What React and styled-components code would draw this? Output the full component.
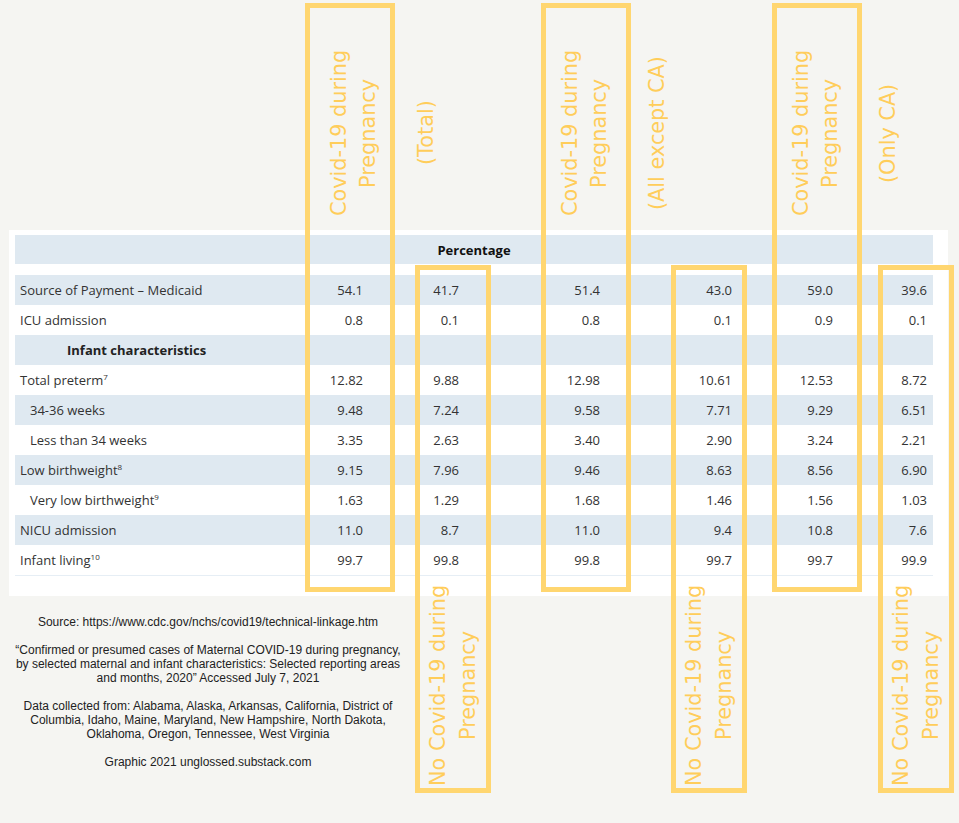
import React from "react";
import styled, { createGlobalStyle } from "styled-components";

const YELLOW = "#ffd670";
const CAPTION = "#ffcd5a";
const BAND = "#dfe9f1";

const GlobalStyle = createGlobalStyle`
  html, body {
    margin: 0;
    padding: 0;
    background: #f5f5f2;
  }
  #root {
    width: 959px;
  }
`;

const Page = styled.div`
  position: relative;
  width: 959px;
  height: 823px;
  overflow: hidden;
  background: #f5f5f2;
`;

/* ---------- header captions ---------- */
const Header = styled.div`
  display: flex;
  height: 230px;
  box-sizing: border-box;
  padding: 33px 0 0 325px;
`;

const HeaderGroup = styled.div`
  display: flex;
  flex-shrink: 0;
  width: 231px;
  gap: 29px;
`;

const Caption = styled.div`
  writing-mode: vertical-rl;
  transform: rotate(180deg);
  height: ${(p) => p.$len}px;
  font-family: "DejaVu Sans", "Liberation Sans", sans-serif;
  font-size: 20.8px;
  line-height: ${(p) => p.$lh || 29}px;
  text-align: center;
  white-space: nowrap;
  color: ${CAPTION};
  margin-left: ${(p) => p.$ml || 0}px;
  margin-top: ${(p) => p.$mt || 0}px;
  flex-shrink: 0;
`;

/* ---------- table panel ---------- */
const Panel = styled.section`
  margin-left: 9px;
  width: 939px;
  box-sizing: border-box;
  padding: 5px 15px 20px 6px;
  background: #ffffff;
`;

const BandHeader = styled.div`
  height: 29px;
  margin-bottom: 11px;
  display: flex;
  align-items: center;
  justify-content: center;
  background: ${BAND};
  font-family: "Open Sans", "Noto Sans", sans-serif;
  font-size: 13px;
  font-weight: 700;
  color: #111;
`;

const Row = styled.div`
  display: grid;
  grid-template-columns: 288px 60px 96px 141px 132px 101px 94px;
  padding-right: 6px;
  height: 30px;
  align-items: center;
  background: ${(p) => (p.$shaded ? BAND : "#ffffff")};
  border-bottom: ${(p) => (p.$last ? "1px solid #e6eef5" : "none")};
  font-family: "Open Sans", "Noto Sans", sans-serif;
  font-size: 13px;
  color: #333;
`;

const RowLabel = styled.div`
  padding-left: ${(p) => p.$indent}px;
  font-weight: ${(p) => (p.$bold ? 700 : 400)};
  color: ${(p) => (p.$bold ? "#222" : "#333")};
  white-space: nowrap;
`;

const Sup = styled.sup`
  font-size: 8px;
  vertical-align: 5px;
  line-height: 0;
`;

const Value = styled.div`
  text-align: right;
`;

/* ---------- bottom ---------- */
const Bottom = styled.div`
  display: flex;
  margin-top: -13px;
  padding-left: 8px;
`;

const Notes = styled.div`
  width: 400px;
  flex-shrink: 0;
  padding-top: 32px;
  text-align: center;
  font-family: "Liberation Sans", Arial, sans-serif;
  font-size: 12px;
  line-height: 14px;
  color: #222;
`;

const Note = styled.p`
  margin: 0 0 14px;
`;

/* ---------- overlay highlight frames ---------- */
const Frame = styled.div`
  position: absolute;
  left: ${(p) => p.$x}px;
  top: ${(p) => p.$y}px;
  width: ${(p) => p.$w}px;
  height: ${(p) => p.$h}px;
  box-sizing: border-box;
  border: 5px solid ${YELLOW};
  pointer-events: none;
`;

const rows = [
  { label: "Source of Payment – Medicaid", v: ["54.1", "41.7", "51.4", "43.0", "59.0", "39.6"], shaded: true },
  { label: "ICU admission", v: ["0.8", "0.1", "0.8", "0.1", "0.9", "0.1"] },
  { label: "Infant characteristics", bold: true, indent: 47, v: ["", "", "", "", "", ""], shaded: true },
  { label: "Total preterm", sup: "7", v: ["12.82", "9.88", "12.98", "10.61", "12.53", "8.72"] },
  { label: "34-36 weeks", indent: 10, v: ["9.48", "7.24", "9.58", "7.71", "9.29", "6.51"], shaded: true },
  { label: "Less than 34 weeks", indent: 10, v: ["3.35", "2.63", "3.40", "2.90", "3.24", "2.21"] },
  { label: "Low birthweight", sup: "8", v: ["9.15", "7.96", "9.46", "8.63", "8.56", "6.90"], shaded: true },
  { label: "Very low birthweight", sup: "9", indent: 10, v: ["1.63", "1.29", "1.68", "1.46", "1.56", "1.03"] },
  { label: "NICU admission", v: ["11.0", "8.7", "11.0", "9.4", "10.8", "7.6"], shaded: true },
  { label: "Infant living", sup: "10", v: ["99.7", "99.8", "99.8", "99.7", "99.7", "99.9"] },
];

const groups = ["(Total)", "(All except CA)", "(Only CA)"];

const frames = [
  { x: 305, y: 3, w: 90, h: 589 },
  { x: 415, y: 265, w: 76, h: 528 },
  { x: 541, y: 3, w: 90, h: 589 },
  { x: 671, y: 265, w: 76, h: 528 },
  { x: 772, y: 3, w: 90, h: 589 },
  { x: 878, y: 265, w: 76, h: 528 },
];

export default function App() {
  return (
    <Page>
      <GlobalStyle />
      <Header>
        {groups.map((g) => (
          <HeaderGroup key={g}>
            <Caption $len={200}>
              Covid-19 during
              <br />
              Pregnancy
            </Caption>
            <Caption $len={200}>{g}</Caption>
          </HeaderGroup>
        ))}
      </Header>

      <Panel>
        <BandHeader>Percentage</BandHeader>
        {rows.map((r, i) => (
          <Row key={r.label} $shaded={r.shaded} $last={i === rows.length - 1}>
            <RowLabel $indent={5 + (r.indent || 0)} $bold={r.bold}>
              {r.label}
              {r.sup && <Sup>{r.sup}</Sup>}
            </RowLabel>
            {r.v.map((val, j) => (
              <Value key={j}>{val}</Value>
            ))}
          </Row>
        ))}
      </Panel>

      <Bottom>
        <Notes>
          <Note>Source: https://www.cdc.gov/nchs/covid19/technical-linkage.htm</Note>
          <Note>
            “Confirmed or presumed cases of Maternal COVID-19 during pregnancy, by selected maternal and
            infant characteristics: Selected reporting areas and months, 2020” Accessed July 7, 2021
          </Note>
          <Note>
            Data collected from: Alabama, Alaska, Arkansas, California, District of Columbia, Idaho, Maine,
            Maryland, New Hampshire, North Dakota, Oklahoma, Oregon, Tennessee, West Virginia
          </Note>
          <Note>Graphic 2021 unglossed.substack.com</Note>
        </Notes>
        <Caption $len={202} $lh={30} $ml={15} $mt={1}>
          No Covid-19 during
          <br />
          Pregnancy
        </Caption>
        <Caption $len={202} $lh={30} $ml={196} $mt={1}>
          No Covid-19 during
          <br />
          Pregnancy
        </Caption>
        <Caption $len={202} $lh={30} $ml={147} $mt={1}>
          No Covid-19 during
          <br />
          Pregnancy
        </Caption>
      </Bottom>

      {frames.map((f, i) => (
        <Frame key={i} $x={f.x} $y={f.y} $w={f.w} $h={f.h} />
      ))}
    </Page>
  );
}
